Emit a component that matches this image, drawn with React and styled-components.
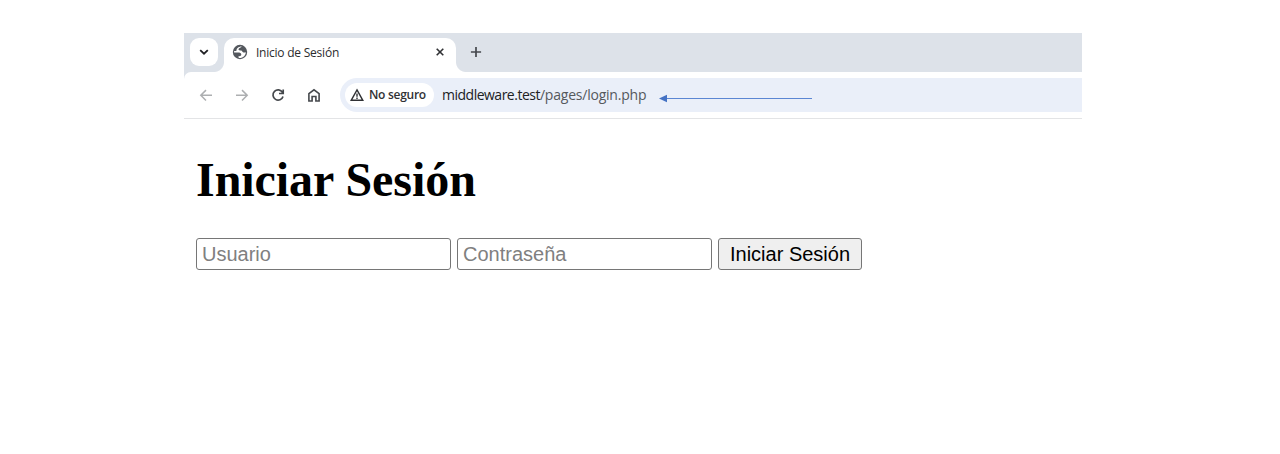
import React from "react";
import styled, { createGlobalStyle } from "styled-components";

const GlobalStyle = createGlobalStyle`
  * { box-sizing: border-box; }
  body { margin: 0; background: #fff; }
`;

const ui = `"Open Sans", "Noto Sans", sans-serif`;

const Page = styled.div`
  width: 1280px;
  height: 454px;
  padding: 33px 198px 0 184px;
  background: #fff;
  overflow: hidden;
`;

const Window = styled.div`
  width: 898px;
`;

const TabStrip = styled.div`
  height: 39px;
  padding: 5px 0 0 6px;
  display: flex;
  align-items: flex-start;
  background: #dde2e9;
`;

const TabSearch = styled.button`
  width: 28px;
  height: 28px;
  margin: 0 6px 0 0;
  padding: 0;
  border: 0;
  border-radius: 9px;
  background: #fff;
  display: flex;
  align-items: center;
  justify-content: center;
`;

const Tab = styled.div`
  position: relative;
  width: 232px;
  height: 34px;
  padding: 0 12px 6px 8px;
  display: flex;
  align-items: center;
  background: #fff;
  border-radius: 10px 10px 0 0;

  &::before,
  &::after {
    content: "";
    position: absolute;
    bottom: 0;
    width: 10px;
    height: 10px;
  }
  &::before {
    left: -10px;
    background: radial-gradient(circle at 0 0, transparent 9.5px, #fff 10.5px);
  }
  &::after {
    right: -10px;
    background: radial-gradient(circle at 100% 0, transparent 9.5px, #fff 10.5px);
  }
`;

const TabTitle = styled.span`
  flex: 1;
  margin-left: 8px;
  padding-top: 1px;
  font: 400 12px/16px ${ui};
  letter-spacing: -0.23px;
  color: #2b2c2e;
  white-space: nowrap;
`;

const NewTab = styled.div`
  width: 12px;
  height: 28px;
  margin-left: 14px;
  display: flex;
  align-items: center;
`;

const ToolbarBack = styled.div`
  background: linear-gradient(#dde2e9, #dde2e9) 0 0 / 8px 7px no-repeat;
`;

const Toolbar = styled.div`
  height: 47px;
  padding: 6px 0 6px 14px;
  display: flex;
  background: #fff;
  border-bottom: 1px solid #e3e4e6;
  border-top-left-radius: 7px;
`;

const Nav = styled.div`
  width: 142px;
  height: 34px;
  display: flex;
  align-items: center;
  gap: 20px;
`;

const AddressBar = styled.div`
  flex: 1;
  height: 34px;
  padding-left: 5px;
  display: flex;
  align-items: center;
  background: #eaeff9;
  border-radius: 17px 0 0 17px;
`;

const SecurityChip = styled.div`
  width: 89px;
  height: 24px;
  padding-left: 5px;
  display: flex;
  align-items: center;
  gap: 5px;
  background: #fff;
  border-radius: 12px;
  font: 600 12px/24px ${ui};
  letter-spacing: -0.28px;
  color: #303134;
  white-space: nowrap;
`;

const Url = styled.div`
  margin-left: 8px;
  width: 217px;
  font: 400 14px/24px ${ui};
  letter-spacing: -0.5px;
  color: #202124;
  white-space: nowrap;
`;

const Path = styled.span`
  color: #55585d;
  letter-spacing: -0.22px;
`;

const Arrow = styled.svg`
  display: block;
  margin-top: 7px;
`;

const Content = styled.main`
  padding: 33px 12px 0;
`;

const Heading = styled.h1`
  margin: 0;
  font: 700 48px/56px "Liberation Serif", serif;
  letter-spacing: -0.05px;
  color: #000;
`;

const Form = styled.form`
  margin-top: 30px;
  display: flex;
  gap: 6px;
`;

const control = `
  height: 32px;
  border: 1px solid #767676;
  border-radius: 3px;
  font: 400 20px/28px "Liberation Sans", sans-serif;
`;

const Field = styled.input`
  ${control}
  width: 255px;
  padding: 0 5px;
  background: #fff;
  &::placeholder { color: #808080; opacity: 1; }
`;

const Submit = styled.button`
  ${control}
  width: 144px;
  padding: 0;
  background: #efefef;
  color: #000;
  white-space: nowrap;
`;

const Icon = ({ size = 16, color = "#45484c", width = 1.6, box = 16, children }) => (
  <svg width={size} height={size} viewBox={`0 0 ${box} ${box}`} fill="none" stroke={color} strokeWidth={width} style={{ flex: "none" }}>
    {children}
  </svg>
);

export default function App() {
  return (
    <>
      <GlobalStyle />
      <Page>
        <Window>
          <TabStrip>
            <TabSearch type="button" aria-label="Buscar pestañas">
              <Icon color="#202124" width={1.8}><path d="M4.2 6.1 8 9.7l3.8-3.6" /></Icon>
            </TabSearch>
            <Tab>
              <svg width="16" height="16" viewBox="0 0 16 16">
                <circle cx="8" cy="8" r="7.2" fill="#54585e" />
                <path
                  d="M9.8 2.4C9.2 3.9 6.6 3.6 6.5 5.3c0 1.2 1.4 1.2 2.5 1.3 1.4.1 1.2 1.7 2.4 1.9.9.2 1.8.1 2.5-.2-.1 2.6-2 4.8-4.4 5.5-.9.3-2 .3-2.9 0v-1.7c1.6.2 2.7-.4 2.7-1.6 0-1.6-1.6-2-3.2-2H2.1c-.1-.5 0-1 .1-1.4h2.2C4.2 4.6 6.2 2.4 9.8 2.4z"
                  fill="#fff"
                />
              </svg>
              <TabTitle>Inicio de Sesión</TabTitle>
              <Icon size={8} box={8} color="#303134" width={1.6}><path d="m.7.7 6.6 6.6m0-6.6L.7 7.3" /></Icon>
            </Tab>
            <NewTab>
              <Icon size={12} box={12} color="#45484d" width={1.7}><path d="M6 .9v10.2M.9 6h10.2" /></Icon>
            </NewTab>
          </TabStrip>
          <ToolbarBack>
            <Toolbar>
              <Nav>
                <Icon color="#adafb1" width={1.5}><path d="M14 8.3H2.8M8 3.1 2.8 8.3 8 13.5" /></Icon>
                <Icon color="#adafb1" width={1.5}><path d="M2 8.3h11.2M8 3.1l5.2 5.2L8 13.5" /></Icon>
                <Icon width={1.7}>
                  <path d="M12.5 5.4A5.1 5.1 0 1 0 13 9.4M13.2 2.5v4H9" />
                </Icon>
                <Icon width={1.6}>
                  <path d="M2.9 6.7 8 2.8l5.1 3.9V14H9.9V9.5H6.1V14H2.9z" />
                </Icon>
              </Nav>
              <AddressBar>
                <SecurityChip>
                  <Icon size={14} box={14} color="#303134" width={1.4}>
                    <path d="M7 1.9 12.8 12.3H1.2zM7 5.4v3.4M7 9.6v1.3" />
                  </Icon>
                  No seguro
                </SecurityChip>
                <Url>middleware.test<Path>/pages/login.php</Path></Url>
                <Arrow width="153" height="9" viewBox="0 0 153 9">
                  <path d="M6 4.5h147" stroke="#5b86d3" strokeWidth="1" />
                  <path d="M0 4.5 8 .7v7.6z" fill="#4472c4" />
                </Arrow>
              </AddressBar>
            </Toolbar>
          </ToolbarBack>
          <Content>
            <Heading>Iniciar Sesión</Heading>
            <Form onSubmit={(e) => e.preventDefault()}>
              <Field placeholder="Usuario" />
              <Field type="password" placeholder="Contraseña" />
              <Submit>Iniciar Sesión</Submit>
            </Form>
          </Content>
        </Window>
      </Page>
    </>
  );
}
